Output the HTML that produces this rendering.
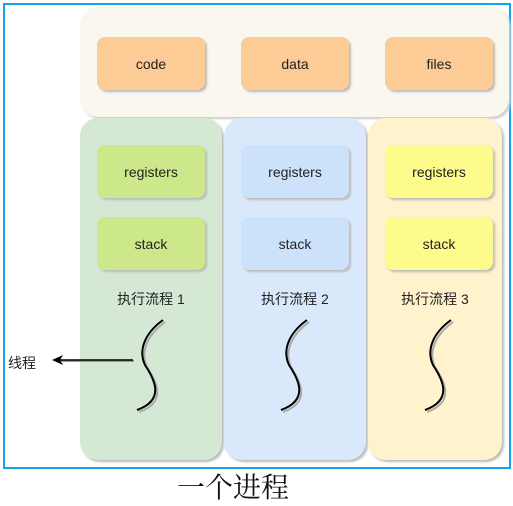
<!DOCTYPE html>
<html><head><meta charset="utf-8"><style>
body{margin:0;width:513px;height:500px;background:#fff;position:relative;overflow:hidden;font-family:"Liberation Sans","Noto Sans CJK SC",sans-serif;}
.a{position:absolute;box-sizing:border-box}
.frame{left:3px;top:3px;width:508px;height:466px;border:2px solid #13a4ec}
.top{left:80px;top:7px;width:429px;height:110px;background:#f9f7ee;border-radius:18px;box-shadow:2px 2px 2px #ccc}
.col{top:118px;width:142px;height:342px;border-radius:18px;box-shadow:2px 2px 2px #bbb}
.b{width:108px;height:53px;border-radius:8px;display:flex;align-items:center;justify-content:center;font-size:14px;color:#222;box-shadow:2px 2px 2px #bbb}
.lbl{width:142px;text-align:center;font-size:14px;color:#222;top:289px}
</style></head><body>
<div class="a frame"></div>
<div class="a top"></div>
<div class="a b" style="left:97px;top:37px;background:#fccb96">code</div>
<div class="a b" style="left:241px;top:37px;background:#fccb96">data</div>
<div class="a b" style="left:385px;top:37px;background:#fccb96">files</div>
<div class="a col" style="left:80px;background:#d5e8d4"></div>
<div class="a col" style="left:224px;background:#dae8fc"></div>
<div class="a col" style="left:368px;width:134px;background:#fff2cc"></div>
<div class="a b" style="left:97px;top:145px;background:#cde88a">registers</div>
<div class="a b" style="left:97px;top:217px;background:#cde88a">stack</div>
<div class="a b" style="left:241px;top:145px;background:#cce2fb">registers</div>
<div class="a b" style="left:241px;top:217px;background:#cce2fb">stack</div>
<div class="a b" style="left:385px;top:145px;background:#fdfb8c">registers</div>
<div class="a b" style="left:385px;top:217px;background:#fdfb8c">stack</div>
<div class="a lbl" style="left:80px">执行流程 1</div>
<div class="a lbl" style="left:224px">执行流程 2</div>
<div class="a lbl" style="left:368px;width:134px">执行流程 3</div>
<svg class="a" style="left:0;top:0" width="513" height="500">
<defs><g id="c"><path d="M163,320 C145,333 138,350 145,365 C155,380 165,400 137,410" fill="none"/></g></defs>
<g stroke="#aaa" stroke-width="2" transform="translate(2,2)"><use href="#c"/><use href="#c" x="144"/><use href="#c" x="288"/></g>
<g stroke="#000" stroke-width="2"><use href="#c"/><use href="#c" x="144"/><use href="#c" x="288"/></g>
<line x1="133" y1="360" x2="60" y2="360" stroke="#999" stroke-width="2" transform="translate(1,1)"/>
<line x1="133" y1="360" x2="60" y2="360" stroke="#000" stroke-width="1.5"/>
<path d="M52,360 L63,355 L60,360 L63,365 Z" fill="#000"/>
</svg>
<div class="a" style="left:8px;top:353px;font-size:14px;color:#222">线程</div>
<div class="a" style="left:177px;top:469px;font-size:28px;color:#111;font-family:'Noto Serif CJK SC',serif;line-height:34px">一个进程</div>
</body></html>
